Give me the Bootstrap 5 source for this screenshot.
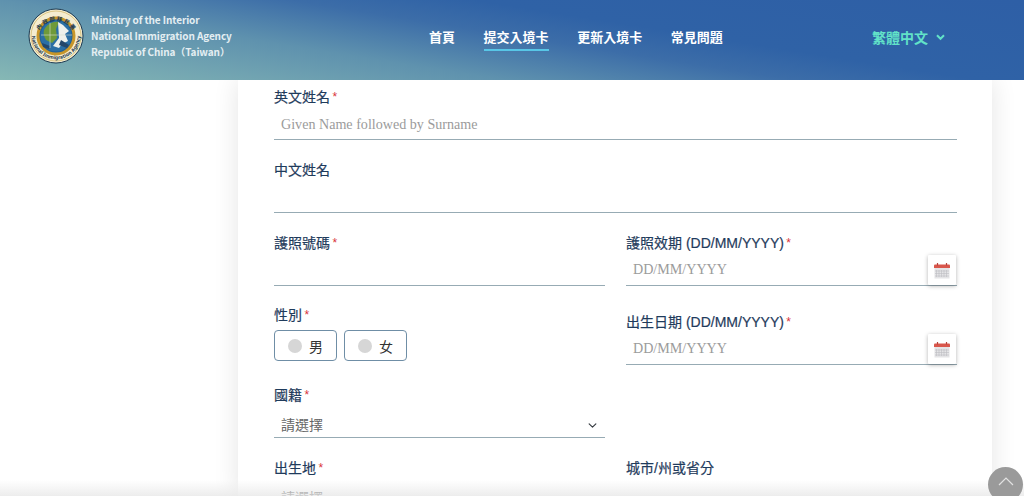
<!DOCTYPE html>
<html lang="zh-Hant">
<head>
<meta charset="utf-8">
<title>提交入境卡</title>
<link href="https://cdn.jsdelivr.net/npm/bootstrap@5.3.0/dist/css/bootstrap.min.css" rel="stylesheet">
<script src="https://cdn.jsdelivr.net/npm/bootstrap@5.3.0/dist/js/bootstrap.bundle.min.js"></script>
<style>
html,body{height:496px;overflow:hidden;background:#fff}
body{font-family:"Liberation Sans","Noto Sans CJK TC",sans-serif;position:relative}
.site-bar{height:80px;padding:0 79px 0 28px;flex-wrap:nowrap;align-items:center;
  background:linear-gradient(9deg,#86b8b5 0%,#5f92ae 33%,#3c6da8 52%,#2f62a6 64%,#2e5fa6 100%)}
.site-brand{gap:7px;width:401px;flex:none;align-items:center;padding:0;margin:-8px 0 0}
.site-brand svg{flex:none;display:block}
.brand-text{font:700 10px/15.7px "Noto Sans CJK TC",sans-serif;letter-spacing:-.1px;color:#e4eef2}
.site-nav{gap:28.6px;flex:none;margin-top:-2px}
.site-nav .nav-link{padding:0 0 3px;font:700 13px/18px "Noto Sans CJK TC",sans-serif;color:#fff;border-bottom:2px solid transparent}
.site-nav .nav-link.active{border-bottom-color:#58c6e6}
.lang-pick{margin-left:auto;margin-top:-6px;padding:0;border:0;background:none;color:#62e2c8;font:700 14px/20px "Noto Sans CJK TC",sans-serif;gap:8px;display:flex;align-items:center}
.page-body{height:416px;overflow:hidden;padding-left:238px;padding-right:32px}
.form-sheet{background:#fff;height:100%;padding:7px 35px 0 36px;box-shadow:0 0 24px rgba(0,0,0,.11);border-radius:0;border:0}
.fld{margin-bottom:20px}
.fld-lab{display:block;margin:0 0 2px;font-size:14px;line-height:20px;color:#1f3b5c;-webkit-text-stroke:.2px #1f3b5c}
.fld-lab b{color:#d9343a;font-weight:400;font-size:12px;margin-left:-1.5px;vertical-align:1px;-webkit-text-stroke:0}
.fld-input.form-control,.fld-input.form-select{height:31px;border:0;border-bottom:1px solid #97abb4;border-radius:0;padding:1px 7px 0;background-color:transparent;box-shadow:none;font:14.1px/30px "Liberation Serif",serif;color:#555}
.date-wrap .fld-input.form-control{padding:0 7px 1px}
.fld-input.form-control::placeholder{color:#9b9b9b;opacity:1}
.fld-input.form-select{font-family:"Noto Sans CJK TC",sans-serif;font-size:14px;color:#666;padding-top:2px;background-position:right 7px top 14px;background-size:11px 9px}
.pair-row{--bs-gutter-x:21px}
.date-wrap{position:relative}
.cal-btn{position:absolute;right:1px;top:0;width:28px;height:30px;padding:0;display:flex;align-items:center;justify-content:center;background:#fff;border:0;border-radius:1px;box-shadow:0 1px 4px rgba(0,0,0,.3)}
.date-fld{margin-bottom:26px}
.gender-group{gap:7px;margin-top:5px}
.gender-opt{width:63px;height:31px;margin:0;padding:0 0 0 13px;display:flex;align-items:center;gap:7px;border:1px solid #6f8ea6;border-radius:4px;background:#fff;font:14px "Liberation Serif","Noto Sans CJK TC",serif;color:#333}
.gender-opt i{width:14px;height:14px;border-radius:50%;background:#d6d6d6;display:block}
.gender-fld{margin-top:-1px;margin-bottom:24px}
.to-top{position:absolute;left:988px;top:467px;width:35px;height:35px;padding:0;border:0;border-radius:50%;background:#9a9a9a;z-index:3;display:flex;justify-content:center;padding-top:10px}
.bottom-fade{position:absolute;left:0;right:0;bottom:0;height:16px;background:linear-gradient(to bottom,rgba(235,235,235,0),rgba(232,232,232,.8));z-index:2;pointer-events:none}
</style>
</head>
<body>
<nav class="navbar site-bar">
  <a class="navbar-brand d-flex site-brand" href="#">
    <svg width="56" height="56" viewBox="0 0 56 56" role="img" aria-label="emblem">
      <defs>
        <path id="arcTop" d="M9 28a19.500 19.500 0 0 1 38 0"/>
        <path id="arcBot" d="M3.600 29a24.500 24.500 0 0 0 48.800 0"/>
      </defs>
      <circle cx="28" cy="28" r="27" fill="#f4ecd0" stroke="#1d3a52" stroke-width="1"/>
      <circle cx="28" cy="28" r="25" fill="none" stroke="#c9a94f" stroke-width=".6"/>
      <circle cx="28" cy="28" r="18" fill="#1f5f96" stroke="#c8962a" stroke-width="3"/>
      <circle cx="28" cy="28" r="15.600" fill="#2b6fa5"/>
      <path d="M16 22c3-6 9-9 15-8l-3 7 1 9-5 5-6-3c-2-3-3-7-2-10z" fill="#6f9a3a"/>
      <path d="M30 14l5 3 6 6-4 3 3 7-6 3-3 4-6-2 6-8z" fill="#eef1ec"/>
      <path d="M33 32l8 5-2 3-8-3zM14 35l8 3-1 3-6-2z" fill="#24476b"/>
      <path d="M22 15v25M13 27h31" stroke="#d9dfd2" stroke-width=".6" fill="none"/>
      <text font-family="Noto Sans CJK TC,sans-serif" font-size="5.6" font-weight="700" fill="#1d3a52"><textPath href="#arcTop" startOffset="50%" text-anchor="middle" textLength="40">內政部移民署</textPath></text>
      <text font-family="Noto Sans,sans-serif" font-size="5" font-weight="700" fill="#1d3a52"><textPath href="#arcBot" startOffset="50%" text-anchor="middle">National Immigration Agency</textPath></text>
    </svg>
    <span class="brand-text">Ministry of the Interior<br>National Immigration Agency<br>Republic of China（Taiwan）</span>
  </a>
  <ul class="nav site-nav">
    <li class="nav-item"><a class="nav-link" href="#">首頁</a></li>
    <li class="nav-item"><a class="nav-link active" href="#">提交入境卡</a></li>
    <li class="nav-item"><a class="nav-link" href="#">更新入境卡</a></li>
    <li class="nav-item"><a class="nav-link" href="#">常見問題</a></li>
  </ul>
  <button class="lang-pick" type="button">繁體中文
    <svg width="9" height="7" viewBox="0 0 9 7"><path d="M1 1.200l3.500 3.600L8 1.200" fill="none" stroke="#62e2c8" stroke-width="2"/></svg>
  </button>
</nav>

<main class="page-body">
  <form class="card form-sheet">
    <div class="fld">
      <label class="fld-lab">英文姓名 <b>*</b></label>
      <input class="form-control fld-input" placeholder="Given Name followed by Surname">
    </div>
    <div class="fld">
      <label class="fld-lab">中文姓名</label>
      <input class="form-control fld-input">
    </div>
    <div class="row pair-row">
      <div class="col-6">
        <div class="fld">
          <label class="fld-lab">護照號碼 <b>*</b></label>
          <input class="form-control fld-input">
        </div>
        <div class="gender-fld">
          <label class="fld-lab mb-0">性別 <b>*</b></label>
          <div class="d-flex gender-group">
            <label class="gender-opt"><i></i>男</label>
            <label class="gender-opt"><i></i>女</label>
          </div>
        </div>
        <div class="fld">
          <label class="fld-lab">國籍 <b>*</b></label>
          <select class="form-select fld-input"><option>請選擇</option></select>
        </div>
      </div>
      <div class="col-6">
        <div class="date-fld">
          <label class="fld-lab">護照效期 (DD/MM/YYYY) <b>*</b></label>
          <div class="date-wrap">
            <input class="form-control fld-input" placeholder="DD/MM/YYYY">
            <button class="cal-btn" type="button" aria-label="calendar">
              <svg width="16" height="17" viewBox="0 0 16 17"><rect x=".5" y="6" width="15" height="10.500" fill="#e4e4e6"/><path d="M2.500 8v7M5 8v7M7.500 8v7M10 8v7M12.500 8v7M1 9h14M1 11.500h14M1 14h14" stroke="#bdbdc2" stroke-width=".6"/><path d="M0 6V3.400Q0 2.400 1 2.400H15Q16 2.400 16 3.400V6z" fill="#d9574c"/><path d="M3.500 1v2.600M12.500 1v2.600" stroke="#b8433a" stroke-width="1.200"/></svg>
            </button>
          </div>
        </div>
        <div>
          <label class="fld-lab">出生日期 (DD/MM/YYYY) <b>*</b></label>
          <div class="date-wrap">
            <input class="form-control fld-input" placeholder="DD/MM/YYYY">
            <button class="cal-btn" type="button" aria-label="calendar">
              <svg width="16" height="17" viewBox="0 0 16 17"><rect x=".5" y="6" width="15" height="10.500" fill="#e4e4e6"/><path d="M2.500 8v7M5 8v7M7.500 8v7M10 8v7M12.500 8v7M1 9h14M1 11.500h14M1 14h14" stroke="#bdbdc2" stroke-width=".6"/><path d="M0 6V3.400Q0 2.400 1 2.400H15Q16 2.400 16 3.400V6z" fill="#d9574c"/><path d="M3.500 1v2.600M12.500 1v2.600" stroke="#b8433a" stroke-width="1.200"/></svg>
            </button>
          </div>
        </div>
      </div>
    </div>
    <div class="row pair-row">
      <div class="col-6">
        <label class="fld-lab">出生地 <b>*</b></label>
        <select class="form-select fld-input"><option>請選擇</option></select>
      </div>
      <div class="col-6">
        <label class="fld-lab">城市/州或省分</label>
        <input class="form-control fld-input">
      </div>
    </div>
  </form>
</main>
<div class="bottom-fade"></div>
<button class="to-top" type="button" aria-label="top">
  <svg width="16" height="9" viewBox="0 0 16 9"><path d="M1 8l7-7 7 7" fill="none" stroke="#e2e2e2" stroke-width="1.200"/></svg>
</button>
</body>
</html>
